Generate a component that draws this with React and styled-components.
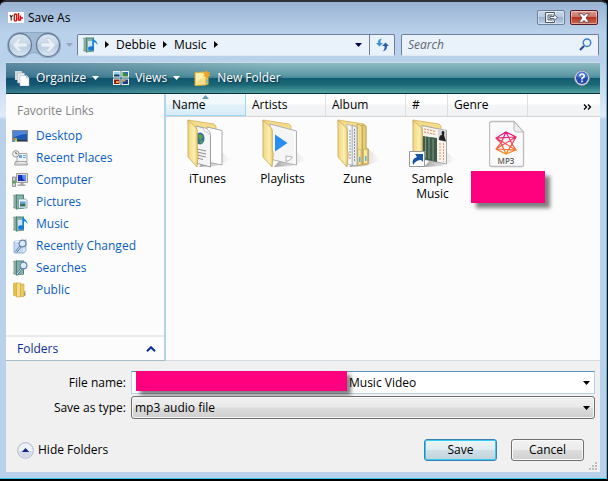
import { useState } from "react";
import styled, { createGlobalStyle } from "styled-components";

const COLORS = {
  frame: "#b9d1ea",
  link: "#0b5cc4",
  panel: "#f0f0f0",
  pane: "#fcfcfc",
  redact: "#ff007f",
};

const LINKS = ["Desktop", "Recent Places", "Computer", "Pictures", "Music", "Recently Changed", "Searches", "Public"];
const COLUMNS = [
  { label: "Name", width: 80, sorted: true },
  { label: "Artists", width: 80 },
  { label: "Album", width: 80 },
  { label: "#", width: 42 },
  { label: "Genre", width: 80 },
];
const FOLDERS = ["iTunes", "Playlists", "Zune", "Sample Music"];

/* ---------- icons ---------- */

const Svg = ({ w = 16, h = 16, children, ...rest }) => (
  <svg width={w} height={h} viewBox={`0 0 ${w} ${h}`} aria-hidden="true" {...rest}>{children}</svg>
);

const Down = ({ color = "#000" }) => (
  <Svg w={7} h={4}><path d="M0 0h7L3.500 4z" fill={color} /></Svg>
);

const Right = () => <Svg w={4} h={7}><path d="M0 0v7l4-3.500z" fill="#000" /></Svg>;

const AppIcon = () => (
  <Svg w={16} h={11}>
    <path fill="#fff" d="M0 0h16v11H0z" />
    <path d="M2 3l1.200 2.500L4.500 3M3.200 5v3.500" stroke="#222" fill="none" strokeWidth="1.100" />
    <path d="M6.300 3v5q0 1 1.200 1t1.200-1V3q0-1-1.200-1T6.300 3z" stroke="#e00b0b" fill="none" strokeWidth="1.400" />
    <path d="M10.500 1v7h2V3.500" stroke="#e00b0b" fill="none" strokeWidth="1.400" />
    <path d="M13 6h2M14 5v2" stroke="#e00b0b" />
  </Svg>
);

const Travel = () => (
  <Svg w={56} h={26}>
    <defs>
      <linearGradient id="orb" x1="0" y1="0" x2="0" y2="1">
        <stop offset="0" stopColor="#d9e5f2" />
        <stop offset=".45" stopColor="#c9d8e8" />
        <stop offset=".5" stopColor="#b6c9dd" />
        <stop offset="1" stopColor="#dbe8f6" />
      </linearGradient>
    </defs>
    <path d="M14 .5h28a12.500 12.500 0 0 1 12.500 12.500 12.500 12.500 0 0 1-21 9.500q-5.500-4-11 0A12.500 12.500 0 0 1 1.500 13 12.500 12.500 0 0 1 14 .5z" fill="#a3bad5" stroke="#8ea8c6" />
    <circle cx="14" cy="13" r="11.500" fill="url(#orb)" stroke="#667c95" strokeWidth="1.300" />
    <circle cx="42" cy="13" r="11.500" fill="url(#orb)" stroke="#667c95" strokeWidth="1.300" />
    <path d="M6.500 13l6-6.500h3.500L12.500 11H21v4h-8.500l3.500 4.500h-3.500z" fill="#e9f0f6" stroke="#c3d2e0" strokeWidth=".7" />
    <path d="M49.500 13l-6-6.500H40l3.500 4.500H35v4h8.500L40 19.500h3.500z" fill="#e9f0f6" stroke="#c3d2e0" strokeWidth=".7" />
  </Svg>
);

const Binder = ({ children }) => (
  <>
    <path d="M1 1l4-.8V15.500l-4-1.500z" fill="#8ba9a1" />
    <path d="M4 .5h8v14l-8 1z" fill="#4c8577" />
    <path d="M5 1.500h6V14l-6 .8z" fill="#84b3ab" />
    <path d="M1.500 2v11" stroke="#bdd2cb" />
    {children}
  </>
);

const Note = () => (
  <Svg>
    <Binder>
      <path d="M6 4h5v9H6z" fill="#cfe4f6" />
      <path d="M11 2v9" stroke="#1688dd" strokeWidth="1.600" />
      <path d="M11 1c1 2.500 4.500 2.500 4.500 7-1-2-2.500-3-4.500-3z" fill="#1688dd" />
      <ellipse cx="9" cy="11.500" rx="2.900" ry="2.200" fill="#1479d0" />
    </Binder>
  </Svg>
);

const Glass = ({ x = 0 }) => (
  <g transform={`translate(${x} 0)`}>
    <path d="M8.500 8.500L4 14" stroke="#5b779b" strokeWidth="2.400" />
    <path d="M8.500 8.500L4 14" stroke="#dce8f5" />
    <circle cx="10.500" cy="5.500" r="3.400" fill="#dcebfa" stroke="#6884a8" strokeWidth="1.200" />
  </g>
);

const LINK_ICONS = {
  Desktop: (
    <Svg>
      <path d="M0 2h16v12H0z" fill="#7f8b96" />
      <path d="M1 3h14v8.500H1z" fill="#1d58b5" />
      <path d="M1 3h14v3Q8 6 1 10z" fill="#4c87d7" />
      <path d="M1 11.500h14V13H1z" fill="#223a55" />
      <path d="M1 10h2v2H1z" fill="#eb6d36" /><path d="M3 10h2v2H3z" fill="#63c65e" />
      <path d="M1 12h2v2H1z" fill="#3d9ff0" /><path d="M3 12h2v2H3z" fill="#f7d34c" />
    </Svg>
  ),
  "Recent Places": (
    <Svg>
      <path d="M5 3.500h10v8H5z" fill="#eef4fa" stroke="#a7a7a7" />
      <path d="M7 5h3v3H7zM11 5h3v1h-3zM11 7h3v1h-3z" fill="#6ba7dc" />
      <path d="M3.500 11.500h11l1 3.500H2.500z" fill="#d8d8d8" stroke="#a4a4a4" />
      <path d="M6 12.500h7" stroke="#eee" />
      <circle cx="3.800" cy="3.800" r="3.200" fill="#f4f4f4" stroke="#999" />
      <path d="M3.800 1.800v2h1.700" stroke="#666" fill="none" />
    </Svg>
  ),
  Computer: (
    <Svg>
      <path d="M.5 5h3v9.500h-3z" fill="#d2d6d8" stroke="#8d9599" />
      <path d="M1 8.500h2v3H1z" fill="#46ac43" />
      <path d="M4.500 1.500h11v9h-11z" fill="#dcdcdc" stroke="#9b9b9b" />
      <path d="M6 3h8v6H6z" fill="#1732b8" /><path d="M10 3h4v6q-4-1-4-6z" fill="#5d8ff0" />
      <path d="M8.500 11h3v1.500h2V14h-8v-1.500h3z" fill="#a9a9a9" />
    </Svg>
  ),
  Pictures: (
    <Svg>
      <Binder>
        <path d="M6.500 5h7l1.500 1.500V14H6.500z" fill="#eaf4fa" stroke="#6c8b94" strokeWidth=".7" />
        <path d="M8 7.500h5.500V10H8z" fill="#5e9fd2" /><path d="M8 10h5.500v2.500H8z" fill="#3b6d5b" />
      </Binder>
    </Svg>
  ),
  Music: <Note />,
  "Recently Changed": (
    <Svg>
      <path d="M3 3h9l2-1.500v11L12 15H2V4z" fill="#c4daf2" stroke="#86a9d1" strokeWidth=".8" />
      <path d="M3 3.500h9V14" stroke="#f2f8fe" fill="none" />
      <Glass />
    </Svg>
  ),
  Searches: <Svg><Binder><Glass x={1} /></Binder></Svg>,
  Public: (
    <Svg>
      <path d="M1 1l4-.5V15l-4-1.500z" fill="#e2bd4f" />
      <path d="M4.500 1h4v14h-4z" fill="#f4dc83" stroke="#caa53c" strokeWidth=".6" />
      <path d="M8.500 2H12v12.500H8.500z" fill="#eaca66" stroke="#caa53c" strokeWidth=".6" />
      <path d="M12 9h1.500v5H12z" fill="#d7ac3a" /><path d="M12 11h1v2h-1z" fill="#3aa3e8" />
    </Svg>
  ),
};

const OrganizeIcon = () => (
  <Svg>
    <path d="M1 1h7v9H1z" fill="#cfd9dd" />
    <path d="M3.500 3h7v10h-7z" fill="#e6ecee" stroke="#a5b5bb" strokeWidth=".5" />
    <path d="M6 5.500h6.500L15 8v8H6z" fill="#fff" stroke="#a5b5bb" strokeWidth=".5" />
    <path d="M12.500 5.500V8H15" fill="#d5dde0" stroke="#a5b5bb" strokeWidth=".5" />
  </Svg>
);

const ViewsIcon = () => (
  <Svg w={16} h={14}>
    <path d="M0 0h7.500v6.500H0zM8.500 0H16v6.500H8.500zM0 7.500h7.500V14H0zM8.500 7.500H16V14H8.500z" fill="#eef2f5" />
    <path d="M1 1h5.500v4.500H1z" fill="#9ccbe8" /><path d="M1 3.500h5.500v2H1z" fill="#16405a" />
    <path d="M9.500 1H15v4.500H9.500z" fill="#3f8d3d" /><path d="M12 1h3v2h-3z" fill="#3965c8" />
    <path d="M1 8.500h5.500V13H1z" fill="#8f1a11" /><path d="M3 10h3v2H3z" fill="#eda13b" />
    <path d="M9.500 8.500H15V13H9.500z" fill="#183f8f" /><path d="M9.500 8.500h3v2h-3z" fill="#d2a04c" />
  </Svg>
);

const NewFolderIcon = () => (
  <Svg w={17}>
    <path d="M1 2.500L12 2v13l-11 .5z" fill="#f5e08a" stroke="#d3ad41" />
    <path d="M2 3.500h9V8Q6 8 2 12z" fill="#fcf0b0" />
    <path d="M12 6l2.500.5v8L12 15z" fill="#e0b84d" /><path d="M12.300 10h1v3h-1z" fill="#58b5ec" />
    <path d="M12.500 0l1.200 2.600L16.500 2l-1.600 2.300L17 6l-3 .2L13 9l-1.400-2.700L9 6.800l1.500-2.400L8.700 2.500l2.800.2z" fill="#f4a321" />
  </Svg>
);

const Refresh = () => (
  <Svg w={15} h={14}>
    <path d="M4.500 8.500L1 5h2Q2.500 1 7 .5 4.800 2 5.500 5H8z" fill="#3c93d8" />
    <path d="M10.500 4.500L14 8h-2q.3 4.500-4.500 5.500Q10 11.500 9.500 8H7z" fill="#2a5faa" />
  </Svg>
);

const SearchIcon = () => (
  <Svg w={13} h={13}>
    <path d="M5 8L1 12" stroke="#274c91" strokeWidth="2.200" />
    <circle cx="8" cy="4.700" r="3.700" fill="#e8f3fc" stroke="#3f7ecb" strokeWidth="1.500" />
  </Svg>
);

const Help = () => (
  <Svg>
    <circle cx="8" cy="8" r="7.500" fill="#d7dbe5" stroke="#7f8898" strokeWidth=".8" />
    <circle cx="8" cy="8" r="6" fill="#2448b0" />
    <path d="M2.500 7a5.500 5.500 0 0 1 11 0q-5 2-11 0z" fill="#4d76d6" />
    <path d="M5.800 6.200Q5.900 4 8 4t2.200 1.900Q10.200 7.200 8 8.300V9.500" stroke="#fff" strokeWidth="1.600" fill="none" />
    <path d="M7.200 10.600h1.600v1.600H7.200z" fill="#fff" />
  </Svg>
);

const ExitIcon = () => (
  <Svg w={13} h={11}>
    <path d="M9.500 2.500V.5h-9v10h9v-2M7 2.500H3v6h4" fill="none" stroke="#fff" strokeWidth="2.200" />
    <path d="M9.500 2.500V.5h-9v10h9v-2M7 3H3v5h4" fill="none" stroke="#4b5667" />
    <path d="M5 4.500h4v-2l3.500 3L9 8.500v-2H5z" fill="#fff" stroke="#4b5667" strokeWidth=".9" />
  </Svg>
);

const CloseIcon = () => (
  <Svg w={12} h={10}>
    <path d="M.7.7h3.600L6 2.600 7.700.7h3.600L8 5l3.300 4.300H7.700L6 7.400 4.300 9.300H.7L4 5z" fill="#fff" stroke="#5d4a50" strokeWidth=".9" />
  </Svg>
);

const INSIDES = {
  iTunes: (
    <>
      <path d="M24 9l15 3.500V47l-15-3z" fill="#fefefe" stroke="#a9a9a9" />
      <path d="M13 8l10 2.500q4.500 3 4.500 6V49L13 45z" fill="#f5f5f5" stroke="#9e9e9e" />
      <path d="M20 9.500l3 1q4.500 3 4.500 7-2-4-6-4z" fill="#fff" stroke="#b5b5b5" strokeWidth=".6" />
      <ellipse cx="17" cy="20.500" rx="4.500" ry="6" fill="#3b6ca0" />
      <path d="M15 17q4-2 5 2l-3 4zM16 24l4-2-1 4z" fill="#58a345" />
      <path d="M14 31l9 2M14 34l9 2M14 37l9 2M14 40l6 1.500" stroke="#8f8f8f" />
    </>
  ),
  Playlists: (
    <>
      <path d="M12 6l26.500 7v34l-6-1L12 41z" fill="#f5f5f5" stroke="#b0b0b0" />
      <path d="M36.500 14v31" stroke="#fff" />
      <path d="M17 16.500l12.500 8.500L17 33.500z" fill="#2a8df0" />
      <path d="M28 43.500V38l6.500 1q-1 3-6.500 4.500z" fill="#fff" stroke="#a0a0a0" strokeWidth=".8" />
    </>
  ),
  Zune: (
    <>
      <path d="M29 6.500l4 2V30l2.500 1v15l-6 1z" fill="#e9cd73" stroke="#b89948" strokeWidth=".7" />
      <path d="M24 6l5 2v39l-5 1z" fill="#f3dc8b" stroke="#b89948" strokeWidth=".7" />
      <path d="M19 7l5 2v39l-5-1z" fill="#e9ecee" stroke="#999" strokeWidth=".7" />
      <path d="M14 6l5 2v39l-5-1z" fill="#f6f7f8" stroke="#aaa" strokeWidth=".7" />
      <path d="M21.500 11v33M17 12v30" stroke="#8b959d" strokeDasharray="2 1" />
      <path d="M25 31l3 1v15l-3-1zM30.500 31l4 1v13l-4 1z" fill="#f8e8a5" stroke="#b89948" strokeWidth=".5" />
      <path d="M26 39h1.500v5H26zM32 38h1.500v5H32z" fill="#54b4ee" />
    </>
  ),
  "Sample Music": (
    <>
      <path d="M14 7.500l24.500 5V46l-24.500-5z" fill="#f7f4ed" stroke="#a7a7a7" />
      <path d="M14.500 18l14.500 2v24l-14.500-3z" fill="#3d5a4c" />
      <path d="M17.500 19v21M21 19v22M25 21v22" stroke="#8ba37b" strokeWidth=".9" />
      <path d="M16 11l12 2.500M16 14l12 2.500" stroke="#d98555" strokeDasharray="2 1" />
      <path d="M30 11l8 1.500v11L30 22z" fill="#d8d8d8" /><path d="M31 22q0-5 3-5-1-4 1-4t1 4l2 6.500z" fill="#202020" />
      <path d="M32 25v18M35.500 25v19" stroke="#e09a72" strokeDasharray="2 1" />
    </>
  ),
};

const FolderIcon = ({ name }) => (
  <Svg w={50} h={50}>
    <defs>
      <linearGradient id="flap" x1="0" y1="0" x2="1" y2="0">
        <stop offset="0" stopColor="#f1d77c" /><stop offset=".6" stopColor="#fcefb0" /><stop offset="1" stopColor="#e5c467" />
      </linearGradient>
      <linearGradient id="shade" x1="0" y1="0" x2="1" y2="0">
        <stop offset="0" stopColor="#888" stopOpacity=".8" /><stop offset="1" stopColor="#bbb" stopOpacity="0" />
      </linearGradient>
    </defs>
    <path d="M33 29l15 13-15 6-17 1z" fill="url(#shade)" />
    <path d="M5 2l26 4 2 2v32H8z" fill="#f4dc8a" stroke="#d2b35c" strokeWidth="0.800" />
    {INSIDES[name]}
    <path d="M5 2l8.500 8q.8 1 .8 5v17l1 4-1.300 13L5 39z" fill="url(#flap)" stroke="#c5a558" strokeWidth=".8" />
    {name === "Sample Music" && (
      <>
        <path d="M1.500 33.500h15v15h-15z" fill="#fff" stroke="#999" />
        <path d="M5 47q-2-6 4-8L7 36h8v8l-2-2q-5 0-8 5z" fill="#1752a5" />
      </>
    )}
  </Svg>
);

const Mp3Icon = () => (
  <Svg w={38} h={50}>
    <defs>
      <linearGradient id="zune" gradientUnits="userSpaceOnUse" x1="0" y1="14" x2="0" y2="36">
        <stop offset="0" stopColor="#ec008c" /><stop offset="1" stopColor="#f7941d" />
      </linearGradient>
    </defs>
    <path d="M3 3.500h22l9.500 10.500v32.500a2 2 0 0 1-2 2h-30a2 2 0 0 1-2-2V5.500q0-2 2.500-2z" fill="#fafafa" stroke="#bdbdbd" strokeWidth="1.300" />
    <path d="M25 3.500v8q0 2.500 2.500 2.500h7z" fill="#eee" stroke="#b9b9b9" />
    <path d="M17 14l10 5-4 7 4 6-10 4-10-5 5-6-5-5zM7 20l20-1-20 12M7 20l20 12-20-1M17 14l-5 11 5 11M17 14l6 12-6 10" fill="none" stroke="url(#zune)" strokeWidth="1.200" />
    <text x="17" y="46" textAnchor="middle" fontSize="8" fontWeight="600" fill="#606060">MP3</text>
  </Svg>
);

const HideIcon = () => (
  <Svg w={17} h={17}>
    <circle cx="8.500" cy="8.500" r="7.800" fill="#eef1f7" stroke="#a9b3cc" />
    <path d="M2 9a6.500 6.500 0 0 0 13 0z" fill="#d3d9e6" />
    <path d="M4.800 10L8.500 6l3.700 4z" fill="#15298d" />
  </Svg>
);

const App = () => {
  const [fileName, setFileName] = useState("Music Video");

  return (
    <>
      <GlobalStyle />
      <Window>
        <TitleBar>
          <AppIcon />
          <Title>Save As</Title>
          <WindowButton aria-label="Exit"><ExitIcon /></WindowButton>
          <WindowButton $danger aria-label="Close"><CloseIcon /></WindowButton>
        </TitleBar>

        <NavRow>
          <TravelButton aria-label="Back and forward"><Travel /></TravelButton>
          <History><Down color="#92a9c6" /></History>
          <AddressBar>
            <Note />
            <Right />
            <Crumb href="#debbie">Debbie</Crumb>
            <Right />
            <Crumb href="#music">Music</Crumb>
            <Right />
            <AddressDrop aria-label="Previous locations"><Down color="#000050" /></AddressDrop>
            <RefreshButton aria-label="Refresh"><Refresh /></RefreshButton>
          </AddressBar>
          <SearchBox>
            <SearchInput aria-label="Search" placeholder="Search" />
            <SearchIcon />
          </SearchBox>
        </NavRow>

        <Toolbar>
          <ToolButton><OrganizeIcon />Organize<Down color="#fff" /></ToolButton>
          <ToolButton><ViewsIcon />Views<Down color="#fff" /></ToolButton>
          <ToolButton><NewFolderIcon />New Folder</ToolButton>
          <HelpButton aria-label="Help"><Help /></HelpButton>
        </Toolbar>

        <Body>
          <Sidebar>
            <SidebarTitle>Favorite Links</SidebarTitle>
            <LinkList>
              {LINKS.map((link) => (
                <li key={link}>
                  <SideLink href={`#${link}`}>{LINK_ICONS[link]}{link}</SideLink>
                </li>
              ))}
            </LinkList>
            <FoldersToggle>
              Folders
              <Svg w={10} h={6}><path d="M1 5.200l4-4 4 4" fill="none" stroke="#0a2e93" strokeWidth="2" /></Svg>
            </FoldersToggle>
          </Sidebar>

          <FilePane>
            <Columns>
              {COLUMNS.map((column) => (
                <Column key={column.label} $width={column.width} $sorted={column.sorted}>
                  {column.label}
                  {column.sorted && <SortMark><Svg w={7} h={4}><path d="M0 4h7L3.500 0z" fill="#5f9cb9" /></Svg></SortMark>}
                </Column>
              ))}
              <MoreColumns aria-label="More columns">
                <Svg w={9} h={6}><path d="M1 .5L3.500 3 1 5.500M5 .5L7.500 3 5 5.500" fill="none" stroke="#000" strokeWidth="1.300" /></Svg>
              </MoreColumns>
            </Columns>
            <Files>
              {FOLDERS.map((name) => (
                <File key={name}><FolderIcon name={name} />{name}</File>
              ))}
              <File><Mp3Icon /><FileRedaction /></File>
            </Files>
          </FilePane>
        </Body>

        <Footer>
          <Field>
            <Label htmlFor="file-name">File name:</Label>
            <ComboBox>
              <NameRedaction />
              <NameInput id="file-name" value={fileName} onChange={(event) => setFileName(event.target.value)} />
              <ComboDrop aria-label="Recent names"><Down /></ComboDrop>
            </ComboBox>
          </Field>
          <Field>
            <Label htmlFor="file-type">Save as type:</Label>
            <SelectWrap>
              <Select id="file-type"><option>mp3 audio file</option></Select>
              <SelectArrow><Down /></SelectArrow>
            </SelectWrap>
          </Field>
          <Actions>
            <HideFolders><HideIcon />Hide Folders</HideFolders>
            <PushButton $primary>Save</PushButton>
            <PushButton>Cancel</PushButton>
          </Actions>
          <Grip>
            <Svg w={9} h={9}><path d="M7 1h2v2H7zM4 4h2v2H4zM7 4h2v2H7zM1 7h2v2H1zM4 7h2v2H4zM7 7h2v2H7z" fill="#bdbdbd" /></Svg>
          </Grip>
        </Footer>
      </Window>
    </>
  );
};

const GlobalStyle = createGlobalStyle`
  * { box-sizing: border-box; }

  body {
    margin: 0;
    background: #000;
  }

  body, button, input, select {
    font-family: "Open Sans", "Noto Sans", sans-serif;
    font-size: 12px;
    line-height: 16px;
    color: #000;
  }

  button {
    padding: 0;
    border: 0;
    background: none;
  }

  svg {
    display: block;
    flex: none;
  }
`;

const Window = styled.div`
  display: flex;
  flex-direction: column;
  min-height: calc(100vh - 2px);
  margin-right: 1px;
  padding: 0 6px 6px;
  border-top: 2px solid #30303a;
  border-right: 1px solid #35c5e8;
  border-bottom: 1px solid #35c5e8;
  border-radius: 6px 6px 0 0;
  background: linear-gradient(#9ab3d3, #b9d1ea 30px, #b9d1ea 60px, #dfebf8 114px, ${COLORS.frame} 118px);
`;

const TitleBar = styled.header`
  display: flex;
  align-items: center;
  height: 29px;
  padding: 2px 2px 0;
  gap: 4px;
`;
const Title = styled.h1`
  flex: 1;
  margin: 0;
  font-size: 12px;
  font-weight: 400;
`;
const WindowButton = styled.button`
  display: flex;
  align-items: center;
  justify-content: center;
  width: 28px;
  height: 15px;
  border: 1px solid ${(props) => (props.$danger ? "#5b1a26" : "#6c809d")};
  border-radius: 2px;
  box-shadow: inset 0 0 0 1px rgba(255, 255, 255, 0.4);
  background: ${(props) =>
    props.$danger
      ? "linear-gradient(#dc9c91, #cc7264 45%, #b5341f 50%, #cf6a54)"
      : "linear-gradient(#c6d6e8, #b8cbe1 45%, #9db5d1 50%, #b9cee5)"};

  & + & {
    margin-left: 1px;
  }
`;

const NavRow = styled.nav`
  display: flex;
  align-items: center;
  height: 31px;
  padding: 0 1px 4px 0;
`;
const TravelButton = styled.button``;
const History = styled.span`
  width: 15px;
  padding-left: 4px;
`;
const AddressBar = styled.div`
  display: flex;
  flex: 1;
  align-items: center;
  height: 22px;
  padding-left: 4px;
  gap: 7px;
  border: 1px solid #6d7f99;
  border-bottom-color: #dfe9f5;
  border-radius: 2px;
  background: #e9f1fa;
`;
const Crumb = styled.a`
  color: #000;
  text-decoration: none;
`;
const AddressDrop = styled.button`
  display: flex;
  flex: 1;
  justify-content: flex-end;
`;
const RefreshButton = styled.button`
  display: grid;
  place-items: center;
  align-self: stretch;
  width: 25px;
  border-left: 1px solid #6d7f99;
`;
const SearchBox = styled.div`
  display: flex;
  align-items: center;
  width: 198px;
  height: 22px;
  margin-left: 6px;
  padding: 0 6px;
  border: 1px solid #6d7f99;
  border-bottom-color: #dfe9f5;
  border-radius: 2px;
  background: #e9f1fa;
`;
const SearchInput = styled.input`
  flex: 1;
  min-width: 0;
  padding: 0;
  border: 0;
  outline: 0;
  background: none;
  font-style: italic;

  &::placeholder {
    color: #5c6672;
    opacity: 1;
  }
`;

const Toolbar = styled.div`
  display: flex;
  align-items: center;
  height: 32px;
  padding: 0 10px 0 8px;
  gap: 14px;
  border-top: 1px solid #c8dde8;
  border-bottom: 1px solid #06313f;
  background:
    linear-gradient(90deg, rgba(8, 50, 105, 0.35), rgba(8, 50, 105, 0) 45%),
    linear-gradient(#8dbac0, #5e9ba6 40%, #438996 50%, #115d70 51%, #1b6976 72%, #55a5a5);
`;
const ToolButton = styled.button`
  display: flex;
  align-items: center;
  gap: 6px;
  color: #fff;
  text-shadow: 1px 1px 2px #0a2c40;
`;
const HelpButton = styled.button`
  margin-left: auto;
`;

const Body = styled.main`
  display: flex;
  flex: 1;
`;
const Sidebar = styled.aside`
  display: flex;
  flex-direction: column;
  width: 160px;
  border-right: 2px solid #b3d3e8;
  border-bottom: 1px solid #a5bdca;
  background: ${COLORS.pane};
`;
const SidebarTitle = styled.h2`
  margin: 0;
  padding: 9px 11px 6px;
  font-size: 12px;
  font-weight: 400;
  color: #858585;
`;
const LinkList = styled.ul`
  flex: 1;
  margin: 0;
  padding: 0 6px;
  list-style: none;
`;
const SideLink = styled.a`
  display: flex;
  align-items: center;
  height: 22px;
  gap: 8px;
  color: ${COLORS.link};
  text-decoration: none;
  white-space: nowrap;
`;
const FoldersToggle = styled.button`
  display: flex;
  align-items: center;
  justify-content: space-between;
  height: 25px;
  padding: 0 8px 0 11px;
  border-top: 2px solid #eaeaea;
  color: #0a2e93;
`;

const FilePane = styled.section`
  flex: 1;
  border-bottom: 1px solid #d5dce2;
  background: ${COLORS.pane};
`;
const Columns = styled.div`
  display: flex;
  height: 23px;
  border-bottom: 1px solid #d5d5d5;
  background: linear-gradient(#fff 45%, #f4f5f7 50%, #f1f2f4);
`;
const Column = styled.button`
  position: relative;
  width: ${(props) => props.$width}px;
  padding-left: 6px;
  border-right: 1px solid ${(props) => (props.$sorted ? "#96d9f9" : "#dedfe1")};
  text-align: left;
  ${(props) => props.$sorted && "background: linear-gradient(#f2f9fc 45%, #e1f1f9 50%, #d8ecf6); box-shadow: inset 0 -1px #96d9f9;"}
`;
const SortMark = styled.span`
  position: absolute;
  top: 1px;
  left: 50%;
  margin-left: -4px;
`;
const MoreColumns = styled.button`
  display: flex;
  flex: 1;
  align-items: center;
  justify-content: flex-end;
  padding: 4px 8px 0 0;
`;
const Files = styled.div`
  display: flex;
  flex-wrap: wrap;
  padding-left: 4px;
`;
const File = styled.figure`
  display: flex;
  flex-direction: column;
  align-items: center;
  width: 75px;
  margin: 0;
  padding: 1px 12px 0;
  gap: 3px;
  line-height: 15px;
  text-align: center;
`;
const FileRedaction = styled.span`
  width: 74px;
  height: 32px;
  background: ${COLORS.redact};
  box-shadow: 5px 5px 4px rgba(0, 0, 0, 0.5);
`;

const Footer = styled.footer`
  position: relative;
  padding: 9px 5px 11px 0;
  background: ${COLORS.panel};
`;
const Field = styled.div`
  display: flex;
  align-items: center;
  height: 25px;
`;
const Label = styled.label`
  width: 125px;
  padding-right: 5px;
  text-align: right;
`;
const ComboBox = styled.div`
  position: relative;
  display: flex;
  flex: 1;
  align-items: center;
  height: 23px;
  border: 1px solid #b5d2e8;
  border-top-color: #5794bf;
  background: #fff;
`;
const NameRedaction = styled.span`
  position: absolute;
  top: -1px;
  left: 4px;
  width: 211px;
  height: 20px;
  background: ${COLORS.redact};
  box-shadow: 4px 4px 4px rgba(0, 0, 0, 0.5);
`;
const NameInput = styled.input`
  flex: 1;
  min-width: 0;
  padding: 0 0 0 217px;
  border: 0;
  outline: 0;
  background: none;
`;
const ComboDrop = styled.button`
  padding: 0 4px;
`;
const SelectWrap = styled.div`
  position: relative;
  flex: 1;
`;
const Select = styled.select`
  display: block;
  width: 100%;
  height: 23px;
  padding: 0 3px;
  appearance: none;
  border: 1px solid #707070;
  border-radius: 3px;
  box-shadow: inset 0 0 0 1px #f5f5f5;
  background: linear-gradient(#f1f1f1, #e9e9e9 48%, #dcdcdc 52%, #cfcfcf);
`;
const SelectArrow = styled.span`
  position: absolute;
  top: 10px;
  right: 5px;
  pointer-events: none;
`;
const Actions = styled.div`
  display: flex;
  align-items: center;
  margin-top: 19px;
  padding-right: 11px;
  gap: 14px;
`;
const HideFolders = styled.button`
  display: flex;
  align-items: center;
  margin-right: auto;
  padding-left: 11px;
  gap: 4px;
`;
const PushButton = styled.button`
  width: 73px;
  height: 22px;
  border: 1px solid ${(props) => (props.$primary ? "#3c7fb1" : "#707070")};
  border-radius: 3px;
  box-shadow: inset 0 0 0 1px ${(props) => (props.$primary ? "#35cdf2" : "#fafafa")};
  background: ${(props) =>
    props.$primary
      ? "linear-gradient(#ecf4f7, #e0ecf0 48%, #cfdfe6 52%, #bfd3dc)"
      : "linear-gradient(#f2f2f2, #ebebeb 48%, #dddddd 52%, #cfcfcf)"};
`;
const Grip = styled.span`
  position: absolute;
  right: 3px;
  bottom: 2px;
`;

export default App;
